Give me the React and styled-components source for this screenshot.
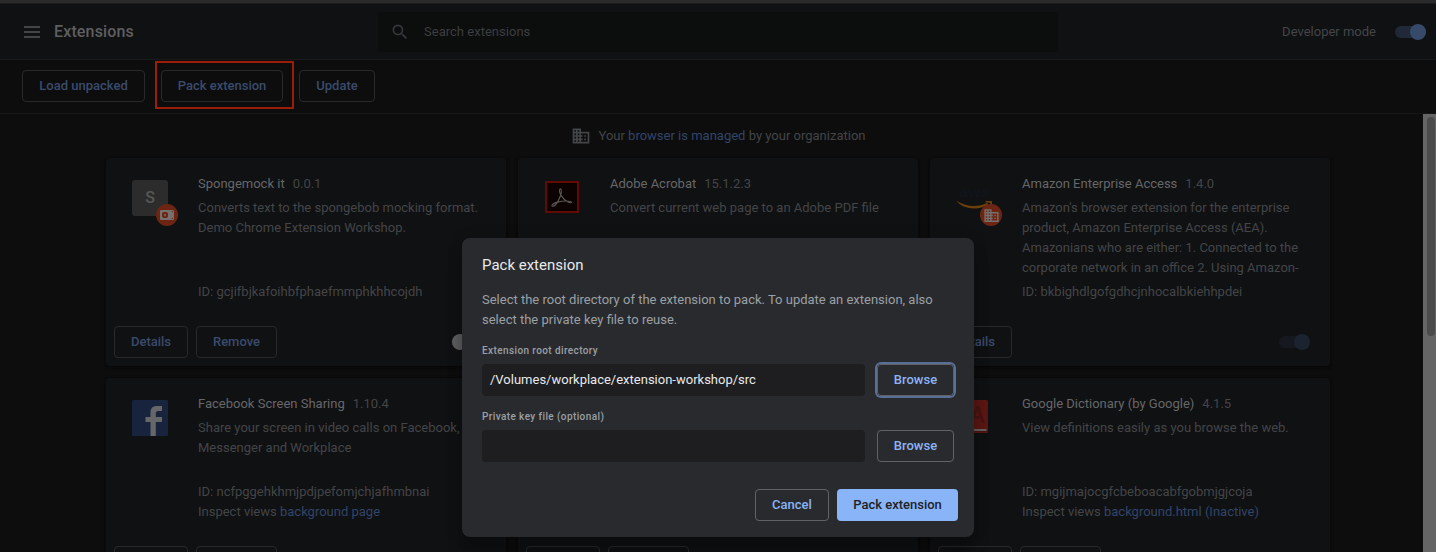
import React from "react";
import styled, { createGlobalStyle } from "styled-components";

const GlobalStyle = createGlobalStyle`
  *, *::before, *::after { box-sizing: border-box; }
  html, body { margin: 0; height: 100%; overflow: hidden; background: #0d0d0e; }
  body { font-family: Roboto, "Liberation Sans", sans-serif; font-size: 13px; line-height: 20px; color: #434547; }
  #root { height: 100%; }
`;

const Page = styled.div`
  height: 552px;
  display: flex;
  flex-direction: column;
  overflow: hidden;
`;

const WindowEdge = styled.div`
  flex: none;
  height: 4px;
  background: #2b2b2b;
  border-bottom: 1px solid #1c1c1d;
`;

const Toolbar = styled.header`
  flex: none;
  height: 56px;
  padding: 0 10px 0 22px;
  display: flex;
  align-items: center;
  background: #101113;
  border-bottom: 1px solid #1a1b1c;
`;

const Brand = styled.div`
  width: 356px;
  display: flex;
  align-items: center;
  gap: 12px;
`;

const MenuIcon = styled.svg`
  width: 20px;
  height: 20px;
  fill: #434547;
`;

const PageTitle = styled.h1`
  margin: 0;
  font-size: 16px;
  font-weight: 500;
  letter-spacing: 0.15px;
  color: #5e5f60;
`;

const SearchBox = styled.div`
  width: 680px;
  height: 40px;
  padding-left: 12px;
  display: flex;
  align-items: center;
  gap: 14px;
  border-radius: 3px;
  background: #0c0d0d;
  color: #3c3e40;
  letter-spacing: 0.02px;
`;

const SearchIcon = styled.svg`
  width: 20px;
  height: 20px;
  fill: #35373a;
`;

const DevMode = styled.div`
  margin-left: auto;
  display: flex;
  align-items: center;
  gap: 19px;
`;

const Track = styled.span`
  width: 31px;
  height: 12px;
  display: flex;
  align-items: center;
  justify-content: ${(p) => (p.$on ? "flex-end" : "flex-start")};
  background: ${(p) => p.$track};
  border-radius: 6px;
`;

const Knob = styled.span`
  flex: none;
  width: 16px;
  height: 16px;
  border-radius: 50%;
  background: ${(p) => p.$color};
`;

const DevBar = styled.div`
  flex: none;
  height: 54px;
  padding: 1px 22px 2px;
  display: flex;
  align-items: center;
  border-bottom: 1px solid #161617;
`;

const Button = styled.button`
  height: 32px;
  width: ${(p) => p.$w}px;
  padding: 0;
  border: 1px solid #28292b;
  border-radius: 4px;
  background: transparent;
  color: #3a4b6c;
  font: 500 13px/20px Roboto, "Liberation Sans", sans-serif;
`;

const Highlight = styled.div`
  align-self: flex-start;
  margin: 0 5px 0 10px;
  width: 139px;
  height: 48px;
  padding: 2px 0 0 4px;
  display: flex;
  align-items: center;
  border: 2px solid #9c1d08;
`;

const Content = styled.main`
  flex: 1;
  min-height: 0;
  display: flex;
`;

const Scroller = styled.div`
  flex: 1;
  overflow: hidden;
  padding-top: 12px;
  padding-left: 106px;
`;

const Scrollbar = styled.div`
  width: 13px;
  padding: 3px 1px 0 4px;
  background: #656565;
`;

const Thumb = styled.div`
  height: 219px;
  border-radius: 4px;
  background: #4b4b4b;
`;

const ManagedNotice = styled.div`
  width: 1224px;
  height: 20px;
  display: flex;
  justify-content: center;
  gap: 8px;
  margin-bottom: 12px;
`;

const OrgIcon = styled.svg`
  width: ${(p) => p.$size}px;
  height: ${(p) => p.$size}px;
  fill: ${(p) => p.$color};
`;

const Link = styled.span`
  color: #324568;
`;

const Cards = styled.div`
  display: grid;
  grid-template-columns: repeat(3, 400px);
  grid-auto-rows: 208px;
  gap: 12px;
`;

const Card = styled.article`
  padding: 16px 20px 8px 8px;
  display: flex;
  flex-direction: column;
  border-radius: 4px;
  background: #101113;
  box-shadow: 0 1px 2px #090909, 0 1px 3px 1px #0b0b0b;
`;

const CardBody = styled.div`
  flex: 1;
  display: flex;
  padding-left: 18px;
`;

const IconSlot = styled.div`
  flex: none;
  width: 66px;
  height: 50px;
  padding-top: 6px;
  position: relative;
  svg { display: block; }
`;

const Badge = styled.div`
  position: absolute;
  left: 24px;
  top: 30px;
  width: 22px;
  height: 22px;
  display: flex;
  align-items: center;
  justify-content: center;
  border-radius: 50%;
  background: #6c2512;
`;

const LetterTile = styled.div`
  width: 36px;
  height: 36px;
  display: flex;
  align-items: center;
  justify-content: center;
  border-radius: 3px;
  background: #2c2c2c;
  color: #575757;
  font-size: 16px;
  font-weight: 500;
`;

const Info = styled.div`
  width: 290px;
  display: flex;
  flex-direction: column;
`;

const NameRow = styled.div`
  display: flex;
  gap: 8px;
`;

const Name = styled.span`
  color: #666768;
`;

const Description = styled.p`
  margin: 4px 0;
  height: ${(p) => (p.$short ? 60 : 80)}px;
  white-space: pre;
`;

const Line = styled.div`
  white-space: nowrap;
`;

const Actions = styled.div`
  display: flex;
  align-items: center;
  gap: 8px;
`;

const TogglePlace = styled.div`
  margin-left: auto;
  margin-right: ${(p) => (p.$off ? 3 : 0)}px;
  display: flex;
`;

const Backdrop = styled.div`
  position: absolute;
  inset: 0;
  padding: 238px 0 0 462px;
`;

const Dialog = styled.section`
  width: 512px;
  height: 299px;
  padding: 17px 16px 16px 20px;
  display: flex;
  flex-direction: column;
  border-radius: 8px;
  background: #292a2d;
  box-shadow: 0 0 16px rgba(0, 0, 0, 0.12), 0 16px 16px rgba(0, 0, 0, 0.24);
  color: #9aa0a6;
`;

const DialogTitle = styled.h2`
  margin: 0 0 15px;
  font-size: 15px;
  line-height: 20px;
  font-weight: 400;
  color: #e8eaed;
`;

const DialogText = styled.p`
  margin: 0 0 16px;
  white-space: pre-line;
`;

const Field = styled.div`
  margin-bottom: 16px;
`;

const Label = styled.div`
  height: 10px;
  margin-bottom: 8px;
  font-size: 10px;
  line-height: 10px;
  font-weight: 500;
  letter-spacing: 0.4px;
`;

const FieldRow = styled.div`
  display: flex;
  gap: 12px;
`;

const Input = styled.div`
  width: 383px;
  height: 32px;
  padding: 6px 8px;
  border-radius: 4px;
  background: #1e1e20;
  color: #e8eaed;
`;

const DialogButton = styled(Button)`
  border-color: #5f6368;
  color: #8ab4f8;
  box-shadow: ${(p) => (p.$focused ? "0 0 0 2px #586f97" : "none")};
`;

const PrimaryButton = styled(DialogButton)`
  border: 0;
  background: #8ab4f8;
  color: #202124;
`;

const DialogActions = styled.div`
  margin-top: auto;
  display: flex;
  justify-content: flex-end;
  gap: 8px;
`;

const Organization = ({ size, color }) => (
  <OrgIcon viewBox="0 0 24 24" $size={size} $color={color}>
    <path d="M12 7V3H2v18h20V7H12zM6 19H4v-2h2v2zm0-4H4v-2h2v2zm0-4H4V9h2v2zm0-4H4V5h2v2zm4 12H8v-2h2v2zm0-4H8v-2h2v2zm0-4H8V9h2v2zm0-4H8V5h2v2zm10 12h-8v-2h2v-2h-2v-2h2v-2h-2V9h8v10zm-2-8h-2v2h2v-2zm0 4h-2v2h2v-2z" />
  </OrgIcon>
);

const SpongemockIcon = () => (
  <>
    <LetterTile>S</LetterTile>
    <Badge>
      <svg width="14" height="10" viewBox="0 0 14 10">
        <rect width="14" height="10" rx="1" fill="#77706e" />
        <rect x="2" y="2" width="6" height="6" rx="2" fill="#6c2512" />
        <circle cx="5" cy="5" r="1" fill="#77706e" />
        <path d="M11.500 1H13v1.500zM11.500 9H13V7.500z" fill="#6c2512" />
      </svg>
    </Badge>
  </>
);

const AcrobatIcon = () => (
  <svg width="36" height="36" viewBox="0 0 36 36">
    <rect x="2" y="2" width="32" height="30" fill="#0d0202" stroke="#620b05" strokeWidth="2" />
    <path d="M8 26c-1-3 9-5 14-5 8 0 6 3 2 1-5-2-10-10-8-13 2-1 2 5-1 10-2 5-5 8-7 7z" fill="none" stroke="#5c5858" strokeWidth="1.100" />
  </svg>
);

const AmazonLetters = styled.text`
  font: 700 15px/1 "Open Sans", Roboto, sans-serif;
  fill: #10141b;
`;

const AmazonIcon = () => (
  <>
    <svg width="40" height="36" viewBox="0 0 40 36">
      <AmazonLetters x="3" y="17">aws</AmazonLetters>
      <path d="M0 20.500c9 6 21 7.500 31 2.500l1.500 1.500C22 31 7 29.500 0 20.500z" fill="#694008" />
      <path d="M29.500 21h6.500v4.500h-1.800V22.700l-4.700-.2z" fill="#694008" />
    </svg>
    <Badge><Organization size={17} color="#77706e" /></Badge>
  </>
);

const FacebookIcon = () => (
  <svg width="36" height="36" viewBox="0 0 36 36">
    <rect width="36" height="36" rx="1.500" fill="#18233e" />
    <path d="M18.500 36V22h-5v-5h5v-4.500C18.500 8 21 6 25 6h5v5h-3.500c-2 0-2.700 1-2.700 2.700V17H30v5h-6.200v14z" fill="#666769" />
  </svg>
);

const DictionaryIcon = () => (
  <svg width="32" height="36" viewBox="0 0 32 36">
    <rect width="32" height="33" rx="1.500" fill="#5b1713" />
    <path d="M14 23l6-17h3l6 17h-3l-1.500-4.500h-6L17 23zM19.500 16h4L21.500 9.500z" fill="#461411" />
    <path d="M0 29h30.500v2H0z" fill="#66605f" />
    <path d="M0 31h32v1H0z" fill="#481310" />
  </svg>
);

const extensions = [
  { name: "Spongemock it", version: "0.0.1", text: "Converts text to the spongebob mocking format.\nDemo Chrome Extension Workshop.", id: "gcjifbjkafoihbfphaefmmphkhhcojdh", Icon: SpongemockIcon, removable: true, off: true },
  { name: "Adobe Acrobat", version: "15.1.2.3", text: "Convert current web page to an Adobe PDF file", Icon: AcrobatIcon, removable: true },
  { name: "Amazon Enterprise Access", version: "1.4.0", text: "Amazon's browser extension for the enterprise\nproduct, Amazon Enterprise Access (AEA).\nAmazonians who are either: 1. Connected to the\ncorporate network in an office 2. Using Amazon-", id: "bkbighdlgofgdhcjnhocalbkiehhpdei", Icon: AmazonIcon },
  { name: "Facebook Screen Sharing", version: "1.10.4", text: "Share your screen in video calls on Facebook,\nMessenger and Workplace", id: "ncfpggehkhmjpdjpefomjchjafhmbnai", view: "background page", Icon: FacebookIcon, removable: true },
  { removable: true },
  { name: "Google Dictionary (by Google)", version: "4.1.5", text: "View definitions easily as you browse the web.", id: "mgijmajocgfcbeboacabfgobmjgjcoja", view: "background.html (Inactive)", Icon: DictionaryIcon, removable: true },
];

const ExtensionCard = ({ name, version, text, id, view, Icon, removable, off }) => (
  <Card>
    <CardBody>
      <IconSlot>{Icon && <Icon />}</IconSlot>
      <Info>
        <NameRow><Name>{name}</Name><span>{version}</span></NameRow>
        <Description $short={Boolean(view)}>{text}</Description>
        {id && <Line>ID: {id}</Line>}
        {view && <Line>Inspect views <Link>{view}</Link></Line>}
      </Info>
    </CardBody>
    <Actions>
      <Button $w={74}>Details</Button>
      {removable && <Button $w={81}>Remove</Button>}
      <TogglePlace $off={off}>
        {off
          ? <Track $track="#2d2d2e"><Knob $color="#5e5e5f" /></Track>
          : <Track $on $track="#15181f"><Knob $color="#1b2330" /></Track>}
      </TogglePlace>
    </Actions>
  </Card>
);

export default function App() {
  return (
    <>
      <GlobalStyle />
      <Page>
        <WindowEdge />
        <Toolbar>
          <Brand>
            <MenuIcon viewBox="0 0 20 20"><path d="M2 4h16v2H2zM2 9h16v2H2zM2 14h16v2H2z" /></MenuIcon>
            <PageTitle>Extensions</PageTitle>
          </Brand>
          <SearchBox>
            <SearchIcon viewBox="0 0 24 24"><path d="M15.500 14h-.79l-.28-.27A6.471 6.471 0 0 0 16 9.500 6.500 6.500 0 1 0 9.500 16c1.610 0 3.090-.59 4.230-1.570l.27.28v.79l5 4.990L20.490 19l-4.990-5zm-6 0C7.010 14 5 11.990 5 9.500S7.010 5 9.500 5 14 7.010 14 9.500 11.990 14 9.500 14z" /></SearchIcon>
            Search extensions
          </SearchBox>
          <DevMode>
            Developer mode
            <Track $on $track="#20283a"><Knob $color="#384a69" /></Track>
          </DevMode>
        </Toolbar>
        <DevBar>
          <Button $w={123}>Load unpacked</Button>
          <Highlight><Button $w={122}>Pack extension</Button></Highlight>
          <Button $w={76}>Update</Button>
        </DevBar>
        <Content>
          <Scroller>
            <ManagedNotice>
              <Organization size={20} color="#434547" />
              <span>Your <Link>browser is managed</Link> by your organization</span>
            </ManagedNotice>
            <Cards>{extensions.map((e, i) => <ExtensionCard key={i} {...e} />)}</Cards>
          </Scroller>
          <Scrollbar><Thumb /></Scrollbar>
        </Content>
      </Page>
      <Backdrop>
        <Dialog>
          <DialogTitle>Pack extension</DialogTitle>
          <DialogText>{"Select the root directory of the extension to pack. To update an extension, also\nselect the private key file to reuse."}</DialogText>
          <Field>
            <Label>Extension root directory</Label>
            <FieldRow>
              <Input>/Volumes/workplace/extension-workshop/src</Input>
              <DialogButton $w={77} $focused>Browse</DialogButton>
            </FieldRow>
          </Field>
          <Field>
            <Label>Private key file (optional)</Label>
            <FieldRow>
              <Input />
              <DialogButton $w={77}>Browse</DialogButton>
            </FieldRow>
          </Field>
          <DialogActions>
            <DialogButton $w={74}>Cancel</DialogButton>
            <PrimaryButton $w={121}>Pack extension</PrimaryButton>
          </DialogActions>
        </Dialog>
      </Backdrop>
    </>
  );
}
